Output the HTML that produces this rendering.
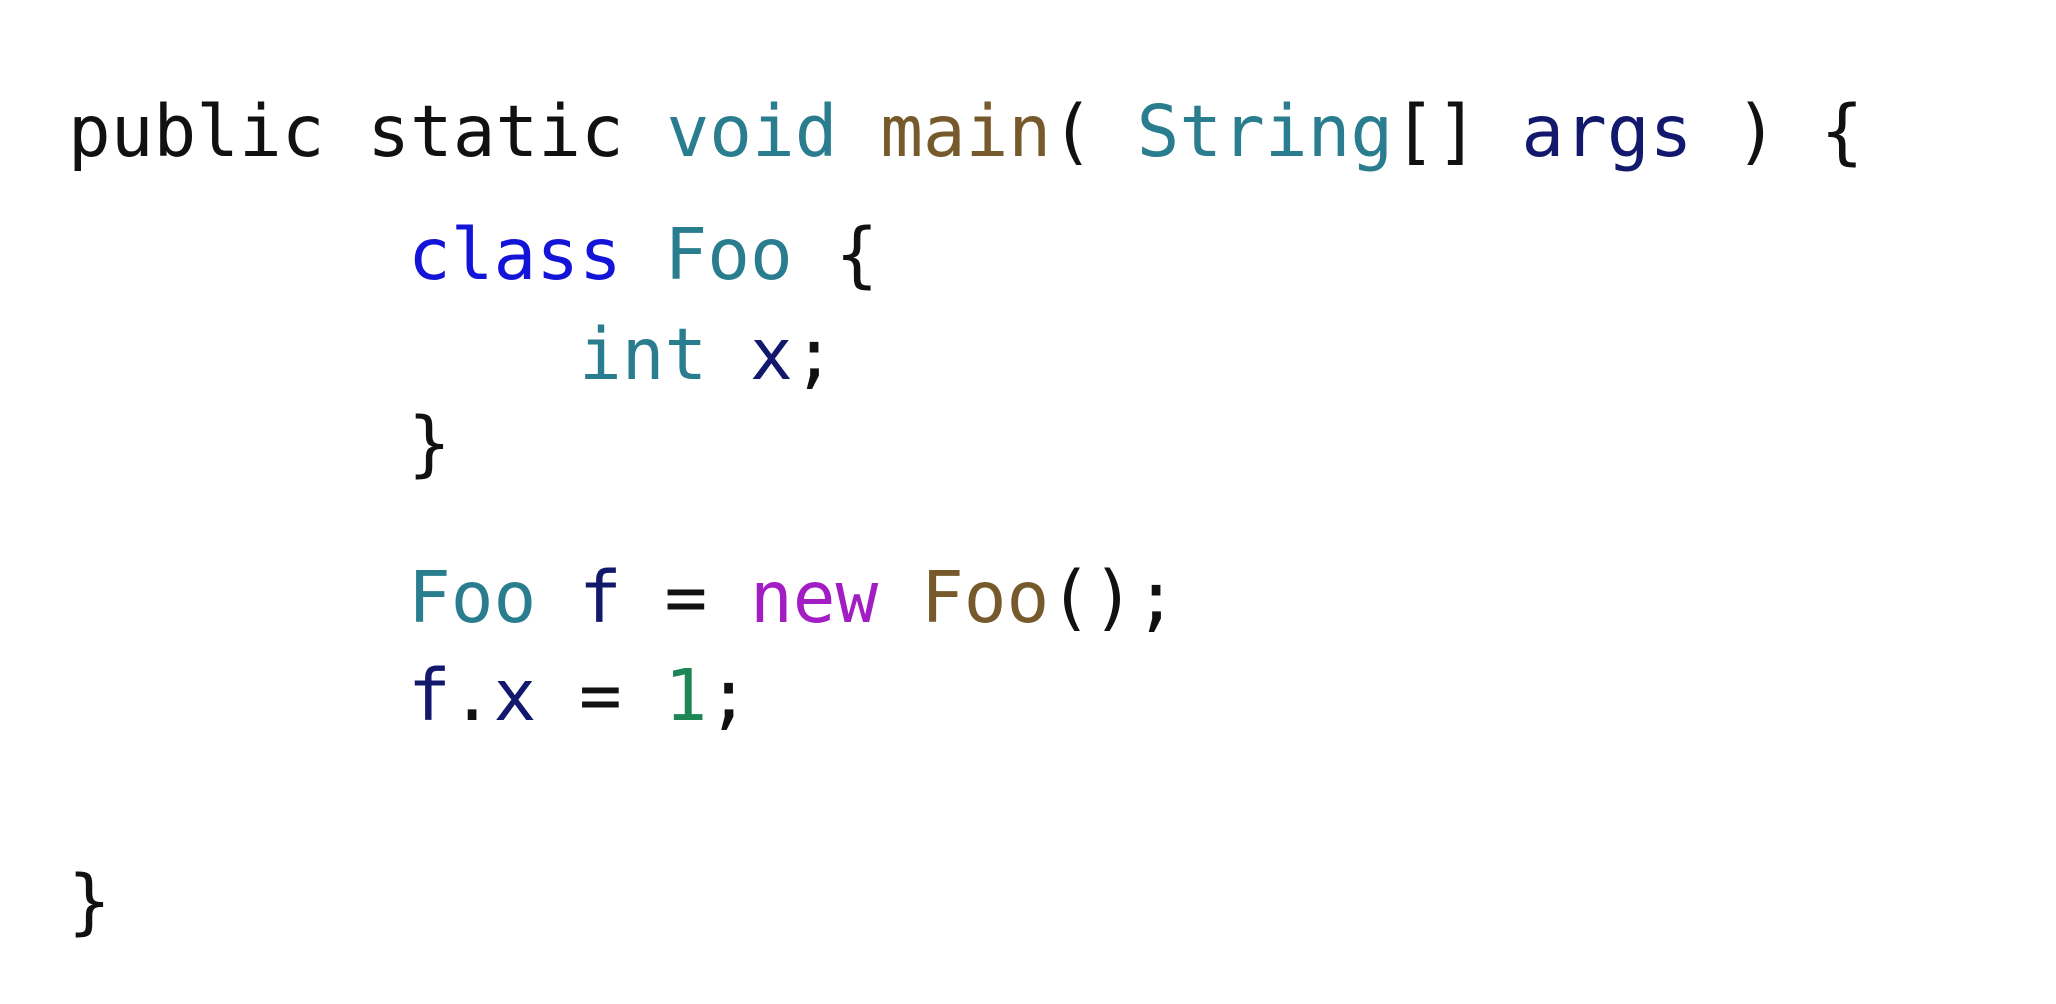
<!DOCTYPE html>
<html><head><meta charset="utf-8"><style>
html,body{margin:0;padding:0;background:#fff;width:2056px;height:1004px;overflow:hidden}
svg{display:block}
text{font-family:"DejaVu Sans Mono","Liberation Mono",monospace;font-size:71px;white-space:pre}
.k{fill:#111}.t{fill:#2a7d8e}.b{fill:#765a2c}.n{fill:#12186b}.c{fill:#1414d8}.p{fill:#a21ec4}.g{fill:#1c8655}
</style></head><body>
<svg width="2056" height="1004" xmlns="http://www.w3.org/2000/svg" xml:space="preserve">
<text x="68" y="156"><tspan class="k">public static </tspan><tspan class="t">void</tspan><tspan class="k"> </tspan><tspan class="b">main</tspan><tspan class="k">( </tspan><tspan class="t">String</tspan><tspan class="k">[] </tspan><tspan class="n">args</tspan><tspan class="k"> ) {</tspan></text>
<text x="408" y="279"><tspan class="c">class</tspan><tspan class="k"> </tspan><tspan class="t">Foo</tspan><tspan class="k"> {</tspan></text>
<text x="579" y="379"><tspan class="t">int</tspan><tspan class="k"> </tspan><tspan class="n">x</tspan><tspan class="k">;</tspan></text>
<text x="408" y="468" class="k">}</text>
<text x="408" y="622"><tspan class="t">Foo</tspan><tspan class="k"> </tspan><tspan class="n">f</tspan><tspan class="k"> = </tspan><tspan class="p">new</tspan><tspan class="k"> </tspan><tspan class="b">Foo</tspan><tspan class="k">();</tspan></text>
<text x="408" y="720"><tspan class="n">f</tspan><tspan class="k">.</tspan><tspan class="n">x</tspan><tspan class="k"> = </tspan><tspan class="g">1</tspan><tspan class="k">;</tspan></text>
<text x="68" y="926" class="k">}</text>
</svg>
</body></html>
